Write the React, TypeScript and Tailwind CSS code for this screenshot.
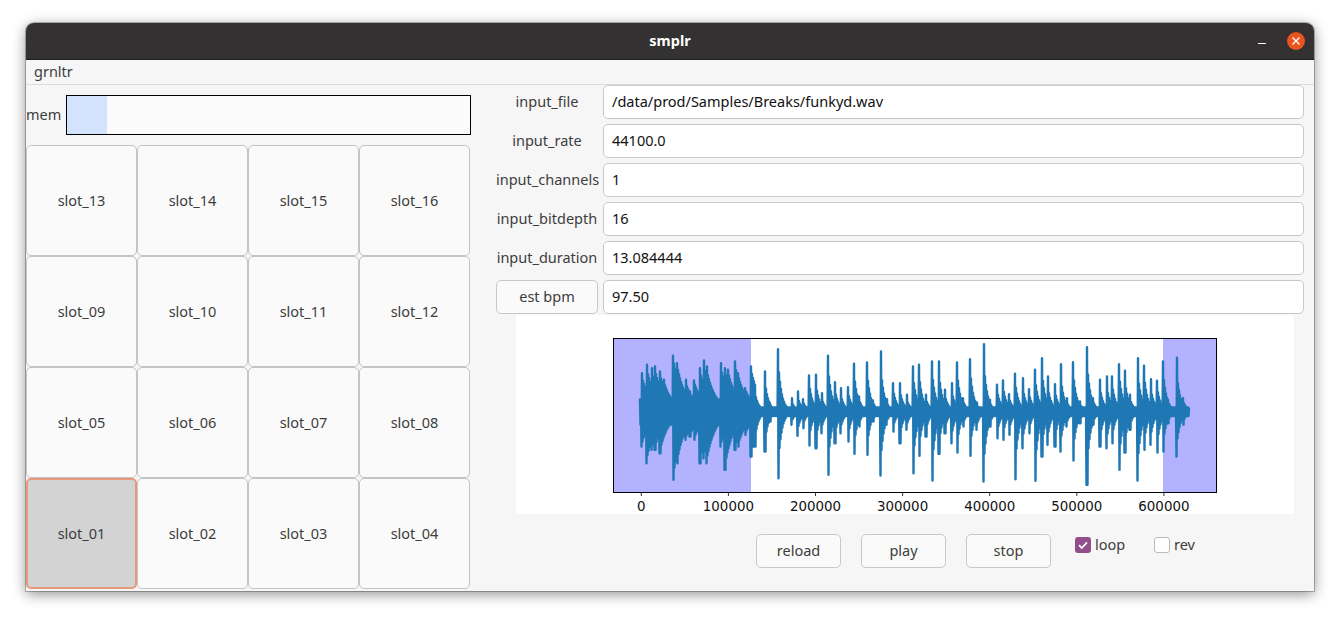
import React from 'react';

const SLOTS = [13, 14, 15, 16, 9, 10, 11, 12, 5, 6, 7, 8, 1, 2, 3, 4];

const FIELDS = [
  { label: 'input_file', value: '/data/prod/Samples/Breaks/funkyd.wav' },
  { label: 'input_rate', value: '44100.0' },
  { label: 'input_channels', value: '1' },
  { label: 'input_bitdepth', value: '16' },
  { label: 'input_duration', value: '13.084444' },
];

// hits read off the reference as [x, top, bottom]
const HITS_A = [
  [118, 200, 290], [125, 130, 350], [140, 105, 400], [155, 115, 360], [165, 110, 360], [180, 125, 370], [192, 150, 310],
  [205, 207, 285], [220, 78, 450], [232, 100, 400], [240, 155, 340], [257, 150, 330], [270, 185, 320], [283, 152, 330],
  [300, 115, 400], [311, 92, 385], [320, 110, 400], [335, 178, 325], [350, 210, 290], [362, 100, 350], [375, 115, 420],
  [385, 120, 350], [405, 95, 360], [415, 130, 350], [436, 175, 315], [453, 110, 380], [465, 170, 350], [480, 230, 260],
  [495, 125, 365], [510, 220, 275], [535, 58, 445], [550, 215, 280], [575, 205, 285], [593, 185, 318], [610, 208, 295],
  [628, 137, 347], [648, 135, 355], [665, 190, 310], [685, 78, 435], [705, 157, 340], [722, 175, 310], [745, 172, 335],
  [763, 102, 372], [778, 200, 290], [802, 98, 375], [820, 212, 275], [842, 65, 437], [860, 208, 285], [880, 160, 305],
  [900, 160, 340], [920, 195, 300],
];
const HITS_B = [
  [10, 110, 430], [28, 105, 378], [48, 195, 320], [67, 95, 452], [87, 95, 372], [105, 180, 310], [125, 160, 340],
  [142, 98, 368], [160, 205, 290], [181, 88, 378], [200, 218, 300], [221, 43, 455], [240, 210, 290], [262, 165, 325],
  [280, 152, 330], [298, 193, 315], [316, 132, 448], [338, 145, 355], [358, 178, 310], [376, 120, 453], [396, 85, 380],
  [413, 140, 345], [435, 163, 350], [452, 103, 365], [470, 205, 290], [490, 97, 392], [510, 215, 280], [531, 52, 465],
  [550, 205, 285], [570, 150, 350], [590, 140, 355], [607, 140, 340], [628, 103, 420], [645, 123, 368], [660, 195, 300],
  [683, 85, 452], [703, 108, 360], [722, 148, 345], [742, 153, 368], [760, 95, 365], [775, 210, 280], [800, 84, 380],
  [820, 205, 285],
];

// all plot coordinates are relative to the white figure, whose corner is at 516,315
const CENTER = 96.5;
const hits = [
  ...HITS_A.map(([x, t, b]) => [84 + x / 3, (245 - t) / 3, (b - 245) / 3]),
  ...HITS_B.map(([x, t, b]) => [394 + x / 3, (245 - t) / 3, (b - 245) / 3]),
];

const wavePoints = () => {
  const pts: string[] = [];
  let flip = false;
  for (let x = 124; x <= 673; x += 0.5) {
    const dense = x < 240;
    let up = dense ? 12 : 4;
    let down = dense ? 13 : 4.5;
    for (const [px, t, b] of hits) {
      const d = x - px;
      if (d < -0.5) continue;
      // sharp spike, then a shoulder that dies away
      const fall = d <= 0.5 ? 1 : dense ? 0.88 * Math.exp(-(d - 0.5) / 9) : 0.66 * Math.exp(-(d - 0.5) / 3.6);
      up = Math.max(up, t * fall);
      down = Math.max(down, b * fall);
    }
    pts.push(`${x},${(flip ? CENTER + down : CENTER - up).toFixed(1)}`);
    flip = !flip;
  }
  return pts.join(' ');
};

const TICKS = [0, 100000, 200000, 300000, 400000, 500000, 600000];

const WavePlot = () => (
  <svg width="778" height="199" viewBox="0 0 778 199" className="block bg-white">
    <rect x="97" y="23" width="138" height="154" fill="#b2b2ff" />
    <rect x="647" y="23" width="54" height="154" fill="#b2b2ff" />
    <polyline points={wavePoints()} fill="none" stroke="#1f77b4" strokeWidth="2.4" strokeLinejoin="round" />
    <rect x="97.5" y="23.5" width="603" height="154" fill="none" stroke="#000" />
    {TICKS.map((t) => {
      const x = 125.3 + (t / 100000) * 87.1;
      return (
        <g key={t}>
          <line x1={x} x2={x} y1="177" y2="181" stroke="#000" strokeWidth="0.8" />
          <text x={x} y="196" textAnchor="middle" fontSize="13.4" fill="#111" fontFamily="'DejaVu Sans', sans-serif">
            {t}
          </text>
        </g>
      );
    })}
  </svg>
);

const Field = ({ label, value }: { label: string; value: string }) => (
  <div className="flex h-[34px] items-center gap-[5px]">
    <div className="w-[102px] text-center whitespace-nowrap">{label}</div>
    <div className="flex h-full flex-1 items-center rounded-[5px] border border-[#cdc7c2] bg-white px-2 text-[#111]">{value}</div>
  </div>
);

const PushButton = ({ children }: { children: React.ReactNode }) => (
  <button className="h-[34px] w-[85px] rounded-[5px] border border-[#cdc7c2] bg-[#fafafa] text-[#3d3d3d]">{children}</button>
);

export default function App() {
  return (
    <div className="min-h-[620px] bg-white pt-[23px] pl-[26px] text-[14.5px] text-[#3d3d3d]" style={{ fontFamily: "'Noto Sans', sans-serif" }}>
      <div className="h-[568px] w-[1288px] overflow-hidden rounded-t-[8px] bg-[#f6f6f6] shadow-[0_0_0_1px_rgba(0,0,0,0.25),0_3px_14px_rgba(0,0,0,0.45)]">
        <div className="relative flex h-[37px] items-center justify-center border-b border-[#1f1e1e] bg-[#333131] text-[14.5px] font-bold text-white">
          <span>smplr</span>
          <div className="absolute top-0 right-[9px] flex h-full items-center gap-[21px]">
            <div className="mt-[5px] h-[1.5px] w-[8px] bg-white" />
            <div className="flex h-[18px] w-[18px] items-center justify-center rounded-full bg-[#e95420]">
              <svg width="10" height="10" viewBox="0 0 10 10">
                <path d="M1.5 1.5l7 7M8.5 1.5l-7 7" stroke="#fff" strokeWidth="1.4" />
              </svg>
            </div>
          </div>
        </div>
        <div className="flex h-[25px] items-center border-b border-[#dcdcdc] pl-2">grnltr</div>
        <div className="flex">
          <div className="w-[445px] shrink-0">
            <div className="mt-[10px] flex h-[40px] items-center">
              <span className="w-[40px]">mem</span>
              <div className="h-full w-[405px] border border-black bg-[#fbfbfb]">
                <div className="h-full w-[40px] bg-[#d3e3fd]" />
              </div>
            </div>
            <div className="mt-[10px] grid grid-cols-[repeat(4,111px)] grid-rows-[repeat(4,111px)]">
              {SLOTS.map((n) => {
                const selected = n === 1;
                return (
                  <button
                    key={n}
                    className={
                      selected
                        ? 'rounded-[5px] border-2 border-[#e8987c] bg-[#d3d3d3]'
                        : 'rounded-[5px] border border-[#c4c4c4] bg-[#fafafa]'
                    }
                  >
                    slot_{String(n).padStart(2, '0')}
                  </button>
                );
              })}
            </div>
          </div>
          <div className="ml-[25px] w-[808px] shrink-0">
            <div className="flex flex-col gap-[5px]">
              {FIELDS.map((f) => (
                <Field key={f.label} label={f.label} value={f.value} />
              ))}
              <div className="flex h-[34px] gap-[5px]">
                <button className="w-[102px] rounded-[5px] border border-[#cdc7c2] bg-[#fafafa]">est bpm</button>
                <div className="flex flex-1 items-center rounded-[5px] border border-[#cdc7c2] bg-white px-2 text-[#111]">97.50</div>
              </div>
            </div>
            <div className="ml-[20px] pt-px">
              <WavePlot />
            </div>
            <div className="mt-[20px] ml-[260px] flex items-start">
              <div className="flex gap-[20px]">
                <PushButton>reload</PushButton>
                <PushButton>play</PushButton>
                <PushButton>stop</PushButton>
              </div>
              <div className="mt-[3px] ml-[24px] flex h-[16px] w-[79px] items-center gap-[4px]">
                <div className="flex h-[16px] w-[16px] items-center justify-center rounded-[3px] bg-[#924d8b]">
                  <svg width="12" height="12" viewBox="0 0 12 12">
                    <path d="M2 6.2l2.8 2.8L10 3.4" fill="none" stroke="#fff" strokeWidth="1.8" />
                  </svg>
                </div>
                <span>loop</span>
              </div>
              <div className="mt-[3px] flex h-[16px] items-center gap-[4px]">
                <div className="h-[16px] w-[16px] rounded-[3px] border border-[#bdb8b3] bg-white" />
                <span>rev</span>
              </div>
            </div>
          </div>
        </div>
      </div>
    </div>
  );
}
